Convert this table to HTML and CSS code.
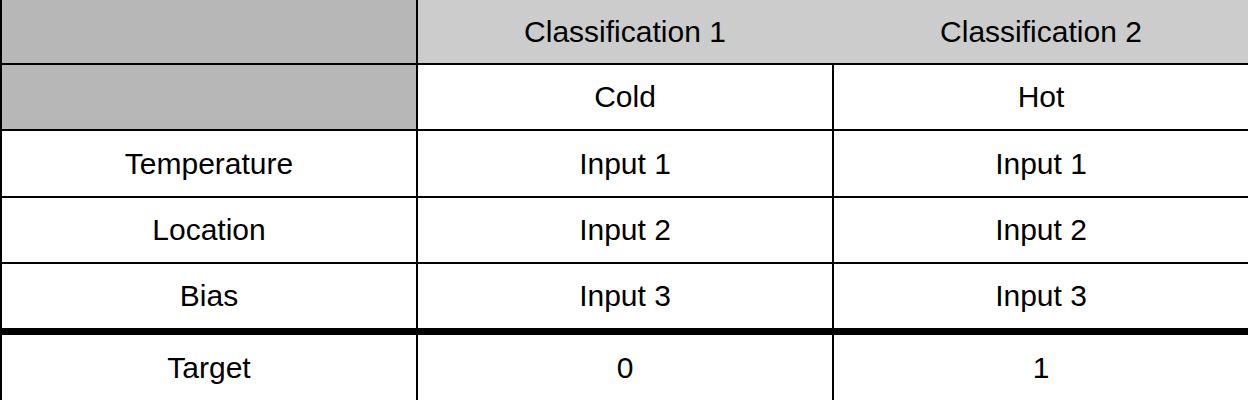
FILE: index.html
```html
<!DOCTYPE html>
<html>
<head>
<meta charset="utf-8">
<link rel="stylesheet" href="styles.css">
</head>
<body>
<div class="grid">
  <div class="cell head-side first"></div>
  <div class="cell head">Classification 1</div>
  <div class="cell head join">Classification 2</div>

  <div class="cell head-side"></div>
  <div class="cell">Cold</div>
  <div class="cell">Hot</div>

  <div class="cell">Temperature</div>
  <div class="cell">Input 1</div>
  <div class="cell">Input 1</div>

  <div class="cell">Location</div>
  <div class="cell">Input 2</div>
  <div class="cell">Input 2</div>

  <div class="cell">Bias</div>
  <div class="cell">Input 3</div>
  <div class="cell">Input 3</div>

  <div class="cell total">Target</div>
  <div class="cell total">0</div>
  <div class="cell total">1</div>
</div>
</body>
</html>
```
FILE: styles.css
```css
html, body {
  margin: 0;
  padding: 0;
  background: #ffffff;
}
body {
  font-family: "Liberation Sans", Arial, sans-serif;
  font-size: 30px;
  color: #000000;
  overflow: hidden;
}
.grid {
  display: grid;
  grid-template-columns: 416px 416px 416px;
  grid-template-rows: 63px 66px 67px 66px 66px 80px;
  width: 1248px;
}
.cell {
  box-sizing: border-box;
  border-left: 2px solid #000;
  border-top: 2px solid #000;
  display: flex;
  align-items: center;
  justify-content: center;
  white-space: nowrap;
}
.head, .head-side.first {
  border-top: none;
}
.head {
  background: #cccccc;
}
.head.join {
  border-left-color: #cccccc;
}
.head-side {
  background: #b7b7b7;
}
.total {
  border-top-width: 7px;
  padding-bottom: 8px;
}
```
